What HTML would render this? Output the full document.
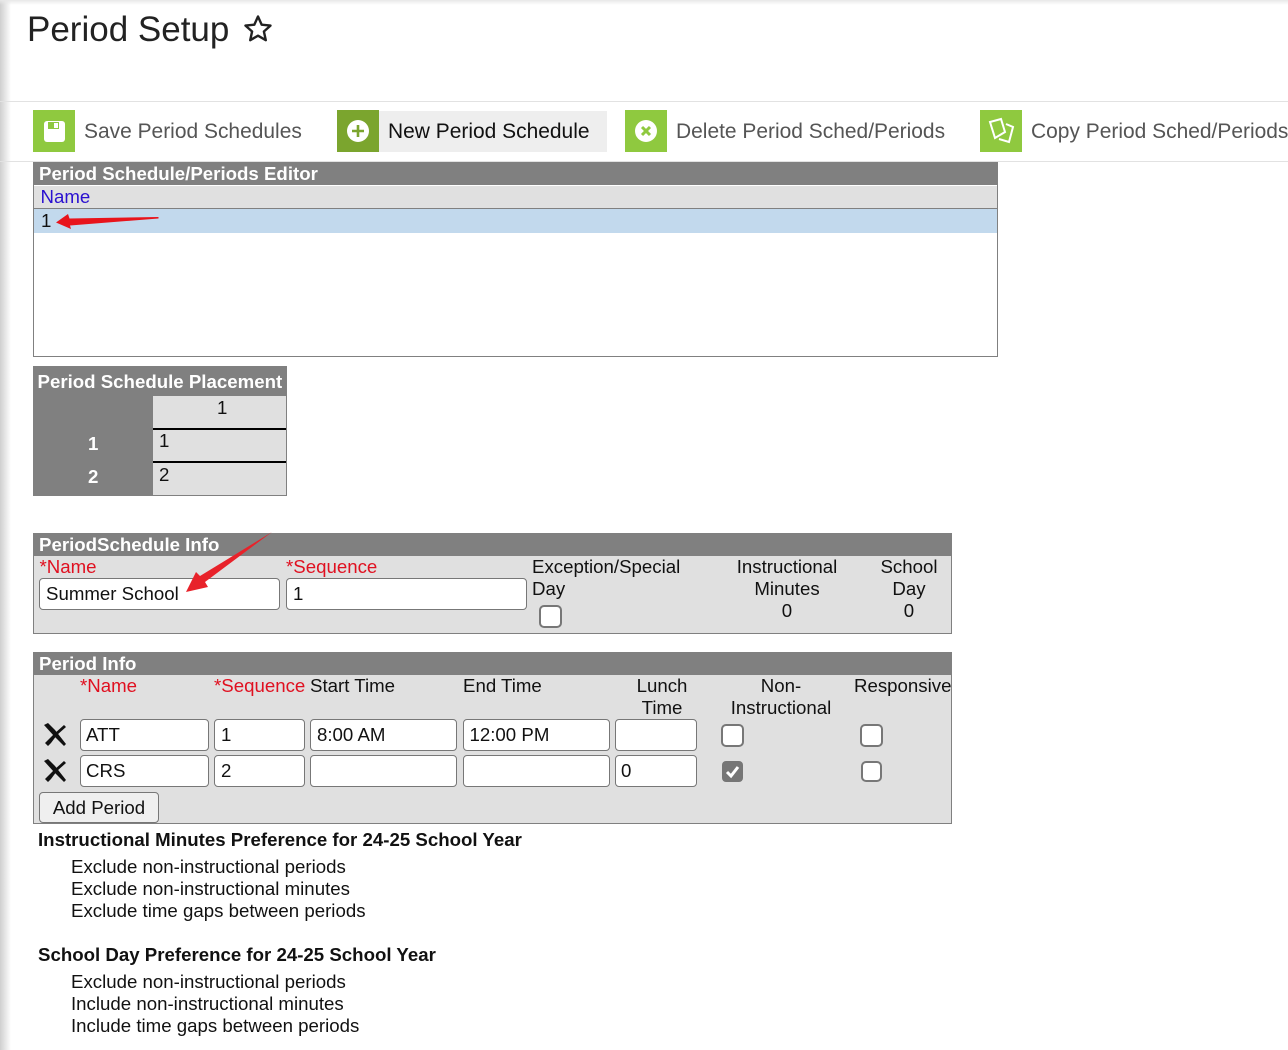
<!DOCTYPE html>
<html><head><meta charset="utf-8"><style>
html,body{margin:0;padding:0;background:#fff}
body{width:1288px;height:1050px;position:relative;overflow:hidden;font-family:"Liberation Sans",Arial,sans-serif;font-size:18.66px;color:#111;line-height:22px}
.a{position:absolute;white-space:nowrap}
.c{text-align:center}
.b{position:absolute;background:#e0e0e0}
.h{position:absolute;background:#808080;color:#fff;font-weight:bold;height:23px;line-height:23px;white-space:nowrap}
.i{position:absolute;box-sizing:border-box;height:32px;background:#fff;border:1px solid #777;border-radius:4px;padding-left:6px;line-height:29px;white-space:nowrap}
.k{position:absolute;box-sizing:border-box;width:23px;height:23px;background:#fff;border:2px solid #777;border-radius:5px}
.r{color:#e01020}
.g{position:absolute;top:110px;width:42px;height:42px;background:#8fc93f}
.t{position:absolute;top:120.5px;line-height:22px;font-size:20.96px;color:#555;white-space:nowrap}
</style></head><body>
<div class="a" style="left:0;top:0;width:11px;height:1050px;background:linear-gradient(90deg,#cfcfcf,#fff)"></div>
<div class="a" style="left:0;top:0;width:1288px;height:5px;background:linear-gradient(180deg,#e8e8e8,rgba(255,255,255,0))"></div>
<div class="a" style="left:27px;top:8px;font-size:35px;line-height:44px;color:#222">Period Setup</div>
<svg class="a" style="left:243px;top:14px" width="30" height="30" viewBox="0 0 30 30"><path d="M15 2.5l3.7 8.2 8.8.9-6.6 5.9 1.9 8.7-7.8-4.5-7.8 4.5 1.9-8.7-6.6-5.9 8.8-.9z" fill="none" stroke="#222" stroke-width="2.4" stroke-linejoin="round"/></svg>
<div class="a" style="left:0;top:101px;width:1288px;height:1px;background:#e2e2e2"></div>
<div class="a" style="left:0;top:161px;width:1288px;height:1px;background:#e2e2e2"></div>

<div class="g" style="left:33px"><svg width="42" height="42" viewBox="0 0 42 42"><rect x="11" y="11" width="21" height="21" rx="3" fill="#fff"/><rect x="15" y="12" width="11" height="7" fill="#8fc93f"/><rect x="21" y="13" width="4" height="5" fill="#fff"/></svg></div>
<div class="t" style="left:84px">Save Period Schedules</div>
<div class="a" style="left:379px;top:111px;width:228px;height:41px;background:#eee"></div>
<div class="g" style="left:337px;background:#7ba52e"><svg width="42" height="42" viewBox="0 0 42 42"><circle cx="21" cy="21" r="11" fill="#fff"/><path d="M21 15v12M15 21h12" stroke="#7ba52e" stroke-width="2.6"/></svg></div>
<div class="t" style="left:388px;color:#111">New Period Schedule</div>
<div class="g" style="left:625px"><svg width="42" height="42" viewBox="0 0 42 42"><circle cx="21" cy="21" r="11" fill="#fff"/><path d="M17 17l8 8M25 17l-8 8" stroke="#8fc93f" stroke-width="3"/></svg></div>
<div class="t" style="left:676px">Delete Period Sched/Periods</div>
<div class="g" style="left:980px"><svg width="42" height="42" viewBox="0 0 42 42" fill="none" stroke="#fff" stroke-width="2"><path d="M10 12l11-3 4 13-10 6z"/><path d="M26 14l7 3-4 15-10-3"/></svg></div>
<div class="t" style="left:1031px">Copy Period Sched/Periods</div>

<!-- Editor -->
<div class="a" style="left:33px;top:162px;width:963px;height:194px;border:1px solid #808080;border-top:0;background:#fff"></div>
<div class="h" style="left:33px;top:162px;width:959px;padding-left:6px">Period Schedule/Periods Editor</div>
<div class="b" style="left:34px;top:186px;width:963px;height:22px"></div>
<div class="a" style="left:34px;top:208px;width:963px;height:1px;background:#808080"></div>
<div class="a" style="left:40.5px;top:186px;color:#2a10d0">Name</div>
<div class="a" style="left:34px;top:209px;width:963px;height:24px;background:#c2d9ed"></div>
<div class="a" style="left:41px;top:210px">1</div>
<svg class="a" style="left:50px;top:210px" width="115" height="22"><path d="M6 12.5L18 4l1.5 4.5L108.500 7v1.500L20 15.500 21 19z" fill="#e8141c"/></svg>

<!-- Placement -->
<div class="a" style="left:33px;top:366px;width:254px;height:130px;background:#808080"></div>
<div class="a" style="left:153px;top:396px;width:133px;height:99px;background:#e0e0e0"></div>
<div class="a" style="left:153px;top:428px;width:133px;height:2px;background:#000"></div>
<div class="a" style="left:153px;top:461px;width:133px;height:2px;background:#000"></div>
<div class="a" style="left:37.5px;top:371px;color:#fff;font-weight:bold">Period Schedule Placement</div>
<div class="a" style="left:217px;top:397px">1</div>
<div class="a" style="left:159px;top:430px">1</div>
<div class="a" style="left:159px;top:464px">2</div>
<div class="a" style="left:88px;top:433px;color:#fff;font-weight:bold">1</div>
<div class="a" style="left:88px;top:466px;color:#fff;font-weight:bold">2</div>

<!-- PeriodSchedule Info -->
<div class="b" style="left:33px;top:533px;width:917px;height:100px;border:1px solid #808080;border-top:0"></div>
<div class="h" style="left:33px;top:533px;width:913px;padding-left:6px">PeriodSchedule Info</div>
<div class="a r" style="left:39.5px;top:556px">*Name</div>
<div class="a r" style="left:286px;top:556px">*Sequence</div>
<div class="a" style="left:532px;top:556px">Exception/Special<br>Day</div>
<div class="a c" style="left:717px;top:556px;width:140px">Instructional<br>Minutes<br>0</div>
<div class="a c" style="left:869px;top:556px;width:80px">School<br>Day<br>0</div>
<div class="i" style="left:39px;top:578px;width:241px">Summer School</div>
<div class="i" style="left:286px;top:578px;width:241px">1</div>
<div class="k" style="left:539px;top:605px"></div>
<svg class="a" style="left:180px;top:530px" width="95" height="65"><path d="M92 2L25 52l3 5-22 5 10-20 4 4z" fill="#e8222a"/></svg>

<!-- Period Info -->
<div class="b" style="left:33px;top:652px;width:917px;height:171px;border:1px solid #808080;border-top:0"></div>
<div class="h" style="left:33px;top:652px;width:913px;padding-left:6px">Period Info</div>
<div class="a r" style="left:80px;top:675px">*Name</div>
<div class="a r" style="left:214px;top:675px">*Sequence</div>
<div class="a" style="left:310px;top:675px">Start Time</div>
<div class="a" style="left:463px;top:675px">End Time</div>
<div class="a c" style="left:612px;top:675px;width:100px">Lunch<br>Time</div>
<div class="a c" style="left:721px;top:675px;width:120px">Non-<br>Instructional</div>
<div class="a" style="left:854px;top:675px">Responsive</div>

<svg class="a" style="left:43px;top:722px" width="26" height="26"><path d="M1 3L5 1 12 8 23 22 21 24 11 14z" fill="#111"/><path d="M21 3L23 5 14 13 8 21 5 24 2 21 5 18 11 12z" fill="#111"/></svg>
<svg class="a" style="left:43px;top:758px" width="26" height="26"><path d="M1 3L5 1 12 8 23 22 21 24 11 14z" fill="#111"/><path d="M21 3L23 5 14 13 8 21 5 24 2 21 5 18 11 12z" fill="#111"/></svg>
<div class="i" style="left:80px;top:719px;width:129px;padding-left:5px">ATT</div>
<div class="i" style="left:214px;top:719px;width:91px">1</div>
<div class="i" style="left:310px;top:719px;width:147px">8:00 AM</div>
<div class="i" style="left:463px;top:719px;width:147px;padding-left:5.500px">12:00 PM</div>
<div class="i" style="left:615px;top:719px;width:82px"></div>
<div class="k" style="left:721px;top:724px"></div>
<div class="k" style="left:860px;top:724px"></div>
<div class="i" style="left:80px;top:755px;width:129px;padding-left:5px">CRS</div>
<div class="i" style="left:214px;top:755px;width:91px">2</div>
<div class="i" style="left:310px;top:755px;width:147px"></div>
<div class="i" style="left:463px;top:755px;width:147px"></div>
<div class="i" style="left:615px;top:755px;width:82px;padding-left:5px">0</div>
<svg class="a" style="left:722px;top:761px" width="21" height="21"><rect width="21" height="21" rx="4" fill="#767676"/><path d="M5 11l4 4 7-9" stroke="#fff" stroke-width="3" fill="none"/></svg>
<div class="k" style="left:861px;top:761px;width:21px;height:21px"></div>
<div class="a c" style="left:39px;top:792px;width:120px;height:31px;box-sizing:border-box;background:#efefef;border:1px solid #777;border-radius:4px;line-height:29px">Add Period</div>

<!-- Prefs -->
<div class="a" style="left:38px;top:828.500px;font-weight:bold">Instructional Minutes Preference for 24-25 School Year</div>
<div class="a" style="left:71px;top:856px">Exclude non-instructional periods<br>Exclude non-instructional minutes<br>Exclude time gaps between periods</div>
<div class="a" style="left:38px;top:943.500px;font-weight:bold">School Day Preference for 24-25 School Year</div>
<div class="a" style="left:71px;top:971px">Exclude non-instructional periods<br>Include non-instructional minutes<br>Include time gaps between periods</div>
</body></html>
